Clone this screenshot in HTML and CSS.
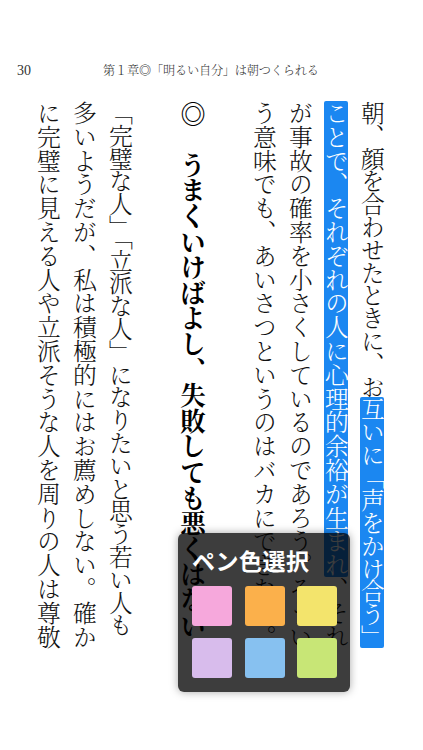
FILE: index.html
```html
<!DOCTYPE html>
<html lang="ja">
<head>
<meta charset="utf-8">
<title>Reader</title>
<link rel="stylesheet" href="styles.css">
</head>
<body>
<div class="page">
  <header class="runhead">
    <span class="folio">30</span>
    <span class="chapter">第１章◎「明るい自分」は朝つくられる</span>
  </header>
  <main class="tate">
    <div class="line tight">朝、顔を合わせたときに、お<span class="hl">互いに「声をかけ合う」</span></div>
    <div class="line"><span class="hl">ことで、それぞれの人に心理的余裕が生まれ</span>、それ</div>
    <div class="line">が事故の確率を小さくしているのであろう。そうい</div>
    <div class="line">う意味でも、あいさつというのはバカにできない。</div>
    <div class="line blank"></div>
    <div class="line midashi">◎　うまくいけばよし、失敗しても悪くはない</div>
    <div class="line blank"></div>
    <div class="line tight">「完璧な人」「立派な人」になりたいと思う若い人も</div>
    <div class="line">多いようだが、私は積極的にはお薦めしない。確か</div>
    <div class="line">に完璧に見える人や立派そうな人を周りの人は尊敬</div>
  </main>
  <div class="pen-popup">
    <div class="pen-title">ペン色選択</div>
    <div class="swatches">
      <span class="sw pink"></span>
      <span class="sw orange"></span>
      <span class="sw yellow"></span>
      <span class="sw lavender"></span>
      <span class="sw blue"></span>
      <span class="sw green"></span>
    </div>
  </div>
</div>
</body>
</html>
```
FILE: styles.css
```css
html, body {
  margin: 0;
  padding: 0;
  background: #ffffff;
}

.page {
  position: relative;
  width: 423px;
  height: 750px;
  overflow: hidden;
  padding-top: 62px;
  box-sizing: border-box;
}

.runhead {
  display: flex;
  align-items: baseline;
  height: 16px;
  line-height: 16px;
  padding-left: 17px;
  color: #333;
}

.folio {
  width: 86px;
  font-family: "Liberation Serif", serif;
  font-size: 14px;
}

.chapter {
  font-family: "Noto Serif CJK JP", "Noto Sans CJK JP", sans-serif;
  font-weight: 300;
  font-size: 12.2px;
  letter-spacing: -0.2px;
}

.tate {
  writing-mode: vertical-rl;
  margin-top: 23px;
  margin-left: 31px;
  width: 360px;
  height: 570px;
  font-family: "Noto Serif CJK JP", "Noto Sans CJK JP", sans-serif;
  font-weight: 300;
  font-size: 23.8px;
  line-height: 36px;
  color: #111;
}

.line {
  white-space: nowrap;
}

.tight {
  letter-spacing: -1px;
}

.blank {
  block-size: 36px;
}

.midashi {
  font-weight: 700;
  font-size: 25.6px;
  color: #000;
}

.hl {
  display: inline-block;
  line-height: 1;
  background: #1b87f1;
  color: #ffffff;
  border-radius: 2px;
}

.pen-popup {
  position: absolute;
  left: 178px;
  top: 533px;
  width: 172px;
  box-sizing: border-box;
  padding: 16px 13px 14px 14px;
  background: rgba(0, 0, 0, 0.76);
  border-radius: 6px;
  box-shadow: 0 0 8px rgba(0, 0, 0, 0.35);
}

.pen-title {
  font-family: "Noto Sans CJK JP", sans-serif;
  font-weight: 700;
  font-size: 23px;
  line-height: 23px;
  color: #ffffff;
  letter-spacing: 0.5px;
}

.swatches {
  display: grid;
  grid-template-columns: repeat(3, 40px);
  grid-auto-rows: 40px;
  column-gap: 12.5px;
  row-gap: 12px;
  margin-top: 14px;
}

.sw {
  display: block;
  border-radius: 3px;
}

.pink { background: #f6a8dc; }
.orange { background: #fbb04b; }
.yellow { background: #f3e46c; }
.lavender { background: #d8bcec; }
.blue { background: #87c1f0; }
.green { background: #c8e676; }
```
